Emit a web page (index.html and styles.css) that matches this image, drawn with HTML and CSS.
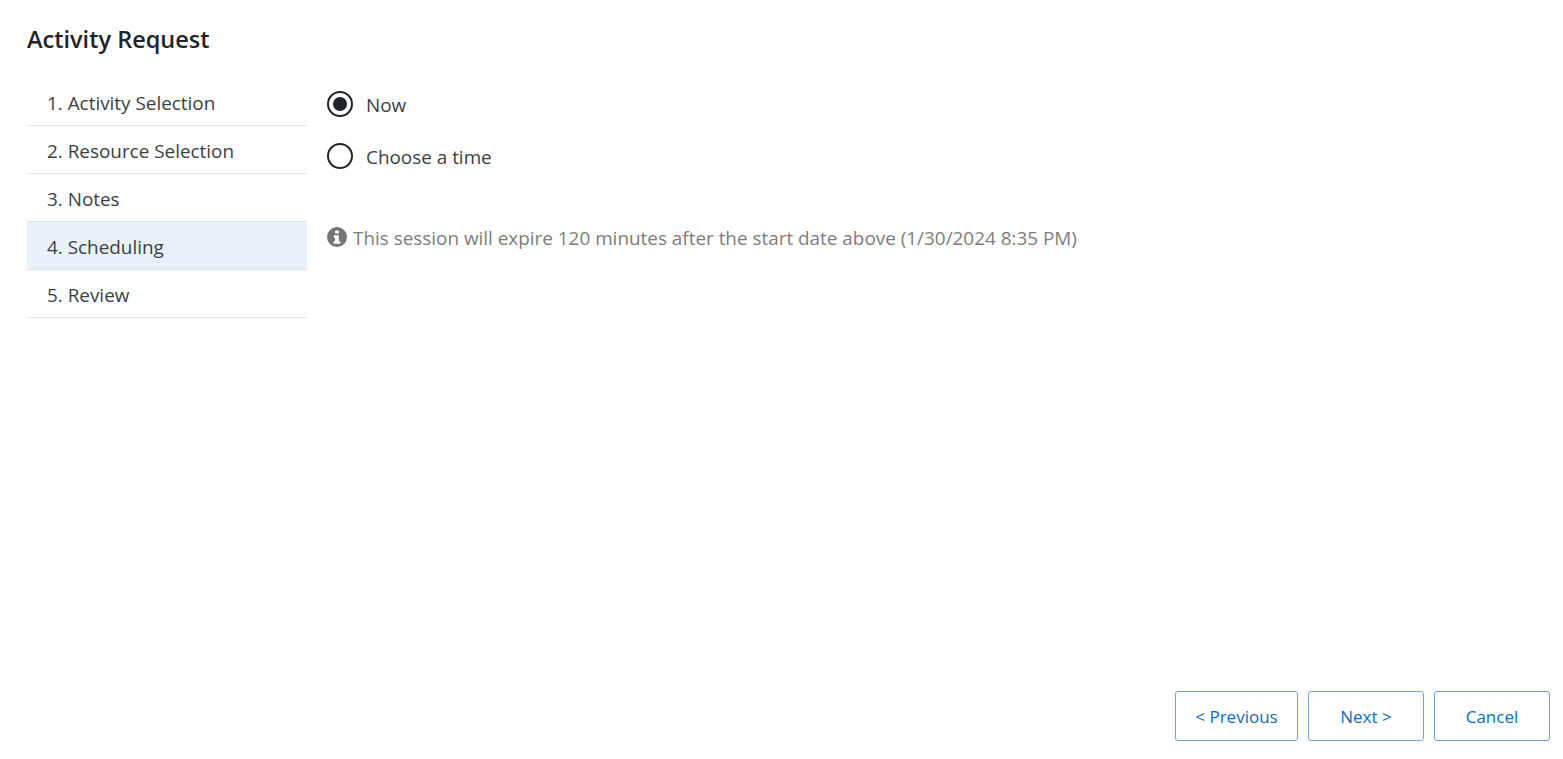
FILE: index.html
```html
<!DOCTYPE html>
<html lang="en">

<head>
    <meta charset="UTF-8">
    <title>Activity Request</title>
    <link rel="stylesheet" href="styles.css">
</head>

<body>
    <div class="page">
        <h1 class="title">Activity Request</h1>
        <div class="main">
            <ul class="steps">
                <li class="step">1. Activity Selection</li>
                <li class="step">2. Resource Selection</li>
                <li class="step">3. Notes</li>
                <li class="step active">4. Scheduling</li>
                <li class="step">5. Review</li>
            </ul>
            <div class="content">
                <label class="option">
                    <span class="radio checked"></span>
                    <span class="option-text">Now</span>
                </label>
                <label class="option">
                    <span class="radio"></span>
                    <span class="option-text">Choose a time</span>
                </label>
                <p class="info">
                    <svg class="info-icon" viewBox="0 0 20 20">
                        <circle cx="10" cy="10" r="10" fill="#757575" />
                        <rect x="8" y="3.4" width="4" height="3.2" rx="1" fill="#fff" />
                        <path d="M6.8 8.2h5v6h1.6v2.6H6.6v-2.6H8v-3.4H6.8z" fill="#fff" />
                    </svg>
                    This session will expire 120 minutes after the start date above (1/30/2024 8:35 PM)
                </p>
            </div>
        </div>
        <div class="actions">
            <button class="btn btn-prev">&lt; Previous</button>
            <button class="btn btn-next">Next &gt;</button>
            <button class="btn btn-cancel">Cancel</button>
        </div>
    </div>
</body>

</html>
```

FILE: styles.css
```css
* {
    box-sizing: border-box;
}

body {
    margin: 0;
    background-color: #fff;
    font-family: "Open Sans", "Liberation Sans", sans-serif;
    color: #3b3f44;
}

.page {
    display: flex;
    flex-direction: column;
    height: 759px;
    padding: 22px 13px 18px 27px;
}

.title {
    margin: 0 0 21px;
    font-size: 23.5px;
    line-height: 35px;
    font-weight: 600;
    color: #212529;
}

.main {
    display: flex;
    flex: 1;
}

.steps {
    width: 280px;
    margin: 0;
    padding: 0;
    list-style: none;
}

.step {
    height: 48px;
    padding-left: 20px;
    font-size: 18.9px;
    line-height: 50px;
    border-bottom: 1px solid #dee2e6;
}

.active {
    background-color: #e9f2fb;
}

.content {
    margin-left: 20px;
    padding-top: 13px;
    font-size: 18.9px;
}

.option {
    display: flex;
    align-items: center;
    gap: 13px;
    height: 26px;
    margin-bottom: 26px;
}

.option-text {
    padding-top: 2px;
    line-height: 26px;
}

.radio {
    width: 26px;
    height: 26px;
    border: 2.5px solid #212529;
    border-radius: 50%;
    display: flex;
    align-items: center;
    justify-content: center;
}

.checked::after {
    content: "";
    width: 14px;
    height: 14px;
    border-radius: 50%;
    background-color: #212529;
}

.info {
    display: flex;
    align-items: center;
    gap: 6px;
    margin: 56px 0 0;
    color: #7d7d7d;
    line-height: 26px;
}

.info-icon {
    width: 20px;
    height: 20px;
    margin-top: -2px;
}

.actions {
    display: flex;
    justify-content: flex-end;
    gap: 10px;
}

.btn {
    height: 50px;
    background-color: #fff;
    border: 1px solid #6fa3d8;
    border-radius: 3px;
    color: #0f6cbd;
    font-family: inherit;
    font-size: 17px;
}

.btn-prev {
    width: 123px;
}

.btn-next,
.btn-cancel {
    width: 116px;
}
```
